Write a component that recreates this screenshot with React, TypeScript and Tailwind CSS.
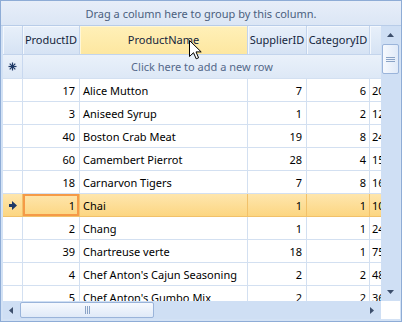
import React from "react";

const rows: [number, string, number, number, string][] = [
  [17, "Alice Mutton", 7, 6, "20 - 1 kg tins"],
  [3, "Aniseed Syrup", 1, 2, "12 - 550 ml bottles"],
  [40, "Boston Crab Meat", 19, 8, "24 - 4 oz tins"],
  [60, "Camembert Pierrot", 28, 4, "15 - 300 g rounds"],
  [18, "Carnarvon Tigers", 7, 8, "16 kg pkg."],
  [1, "Chai", 1, 1, "10 boxes x 20 bags"],
  [2, "Chang", 1, 1, "24 - 12 oz bottles"],
  [39, "Chartreuse verte", 18, 1, "750 cc per bottle"],
  [4, "Chef Anton's Cajun Seasoning", 2, 2, "48 - 6 oz jars"],
  [5, "Chef Anton's Gumbo Mix", 2, 2, "36 boxes"],
];

const font = { fontFamily: '"Noto Sans", "Open Sans", sans-serif' };

function HeaderCell({ w, label, hot }: { w: string; label: string; hot?: boolean }) {
  return (
    <div
      className={`${w} h-full shrink-0 flex items-center justify-center border-r border-b border-[#c3d4ec] overflow-hidden whitespace-nowrap text-[11px] text-[#14253c] ${
        hot
          ? "bg-gradient-to-b from-[#fff0b8] to-[#fde7a0] shadow-[inset_1px_1px_0_#fff7d6]"
          : "bg-gradient-to-b from-[#e8f0fa] to-[#d6e3f4] shadow-[inset_1px_1px_0_#f4f8fd]"
      }`}
    >
      {label}
    </div>
  );
}

function RowArrow() {
  return (
    <svg width="8" height="9" viewBox="0 0 8 9">
      <path d="M3 0 L8 4.5 L3 9 L3 6 L0 6 L0 3 L3 3 Z" fill="#1e3966" />
    </svg>
  );
}

function Star() {
  return (
    <svg width="9" height="9" viewBox="0 0 9 9">
      <g stroke="#1e3966" strokeWidth="1.2">
        <line x1="4.5" y1="0.5" x2="4.5" y2="8.5" />
        <line x1="0.5" y1="4.5" x2="8.5" y2="4.5" />
        <line x1="1.7" y1="1.7" x2="7.3" y2="7.3" />
        <line x1="7.3" y1="1.7" x2="1.7" y2="7.3" />
      </g>
      <circle cx="4.5" cy="4.5" r="1.5" fill="#1e3966" />
    </svg>
  );
}

function Cursor() {
  return (
    <svg width="13" height="20" viewBox="0 0 13 20" className="absolute left-[188px] top-[39px]">
      <path
        d="M0.5 0.5 L0.5 16.5 L4.5 12.7 L7.2 18.8 L9.6 17.8 L7 11.9 L12.2 11.9 Z"
        fill="#ffffff"
        stroke="#000000"
        strokeWidth="1"
        strokeLinejoin="miter"
      />
    </svg>
  );
}

export default function App() {
  return (
    <div
      className="relative w-[402px] h-[322px] border border-[#8eacd6] bg-[#d3e2f5] flex flex-col overflow-hidden"
      style={font}
    >
      {/* group panel */}
      <div className="h-[25px] shrink-0 pt-[2px] border-b border-[#b8cce8] bg-gradient-to-b from-[#e7eef9] to-[#dbe6f5] flex items-center justify-center text-[11px] text-[#4b5f7e]">
        Drag a column here to group by this column.
      </div>

      <div className="flex-1 flex flex-col pl-[2px] pr-[1px] pb-[2px] min-h-0">
        {/* body + vscroll */}
        <div className="h-[275px] flex shrink-0">
          <div className="w-[378px] h-full overflow-hidden bg-white flex flex-col">
            {/* header */}
            <div className="h-[29px] flex shrink-0">
              <HeaderCell w="w-[20px]" label="" />
              <HeaderCell w="w-[57px]" label="ProductID" />
              <HeaderCell w="w-[168px]" label="ProductName" hot />
              <HeaderCell w="w-[59px]" label="SupplierID" />
              <HeaderCell w="w-[63px]" label="CategoryID" />
              <HeaderCell w="w-[40px]" label="" />
            </div>
            {/* new row */}
            <div className="h-[24px] flex shrink-0 border-b border-[#d3e0f1]">
              <div className="w-[20px] shrink-0 h-full flex items-center justify-center bg-gradient-to-b from-[#eaf1fa] to-[#dde8f6] border-r border-[#c8d8ef]">
                <Star />
              </div>
              <div className="flex-1 h-full pt-[2px] flex items-center justify-center bg-gradient-to-b from-[#eaf1fa] to-[#dde8f6] text-[11px] text-[#55698a]">
                Click here to add a new row
              </div>
            </div>
            {/* data rows */}
            {rows.map((r, i) => {
              const sel = r[0] === 1;
              const cellBorder = sel ? "border-[#f1c16a]" : "border-[#d3e0f1]";
              return (
                <div
                  key={i}
                  className={`h-[23px] flex shrink-0 text-[11px] text-black whitespace-nowrap ${
                    sel ? "bg-gradient-to-b from-[#fee6ad] to-[#fcd57f]" : "bg-white"
                  }`}
                >
                  <div className={`w-[20px] shrink-0 h-full flex items-center justify-center border-r border-b ${sel ? "border-[#f1c16a]" : "border-[#d3e0f1]"}`}>
                    {sel ? <RowArrow /> : null}
                  </div>
                  <div
                    className={`w-[57px] shrink-0 h-full pt-[2px] flex items-center justify-end pr-[4px] border-r border-b ${cellBorder} ${
                      sel ? "shadow-[inset_0_0_0_2px_#f59a47]" : ""
                    }`}
                  >
                    {r[0]}
                  </div>
                  <div className={`w-[168px] shrink-0 h-full pt-[2px] flex items-center pl-[3px] border-r border-b overflow-hidden ${cellBorder}`}>
                    {r[1]}
                  </div>
                  <div className={`w-[59px] shrink-0 h-full pt-[2px] flex items-center justify-end pr-[4px] border-r border-b ${cellBorder}`}>
                    {r[2]}
                  </div>
                  <div className={`w-[63px] shrink-0 h-full pt-[2px] flex items-center justify-end pr-[3px] border-r border-b ${cellBorder}`}>
                    {r[3]}
                  </div>
                  <div className={`w-[120px] shrink-0 h-full pt-[2px] flex items-center pl-[2px] border-b ${cellBorder}`}>
                    {r[4]}
                  </div>
                </div>
              );
            })}
          </div>
          {/* vertical scrollbar */}
          <div className="w-[19px] h-full bg-[#cfdff4] flex flex-col items-center">
            <div className="h-[18px] w-full flex items-center justify-center">
              <svg width="7" height="4" viewBox="0 0 7 4">
                <path d="M0 4 L3.5 0 L7 4 Z" fill="#3d4f6c" />
              </svg>
            </div>
            <div className="w-[17px] h-[30px] rounded-[2px] border border-[#9ab4da] bg-gradient-to-r from-[#f6f9fe] to-[#e0eaf8] flex flex-col items-center justify-center gap-[1px]">
              <div className="w-[9px] h-px bg-[#8aa3c6]" />
              <div className="w-[9px] h-px bg-[#8aa3c6]" />
              <div className="w-[9px] h-px bg-[#8aa3c6]" />
            </div>
            <div className="flex-1" />
            <div className="h-[18px] w-full flex items-center justify-center">
              <svg width="7" height="4" viewBox="0 0 7 4">
                <path d="M0 0 L3.5 4 L7 0 Z" fill="#3d4f6c" />
              </svg>
            </div>
          </div>
        </div>
        {/* horizontal scrollbar */}
        <div className="h-[18px] flex shrink-0">
          <div className="w-[378px] h-full bg-[#cfdff4] flex items-center">
            <div className="w-[16px] h-full flex items-center justify-center">
              <svg width="4" height="7" viewBox="0 0 4 7">
                <path d="M4 0 L0 3.5 L4 7 Z" fill="#3d4f6c" />
              </svg>
            </div>
            <div className="ml-[1px] w-[134px] h-[16px] rounded-[2px] border border-[#9ab4da] bg-gradient-to-b from-[#f6f9fe] to-[#e0eaf8] flex items-center justify-center gap-[1px]">
              <div className="w-px h-[8px] bg-[#8aa3c6]" />
              <div className="w-px h-[8px] bg-[#8aa3c6]" />
              <div className="w-px h-[8px] bg-[#8aa3c6]" />
            </div>
            <div className="flex-1" />
            <div className="w-[16px] h-full flex items-center justify-center mr-[1px]">
              <svg width="4" height="7" viewBox="0 0 4 7">
                <path d="M0 0 L4 3.5 L0 7 Z" fill="#3d4f6c" />
              </svg>
            </div>
          </div>
          <div className="w-[19px] h-full bg-white" />
        </div>
      </div>
      <Cursor />
    </div>
  );
}
